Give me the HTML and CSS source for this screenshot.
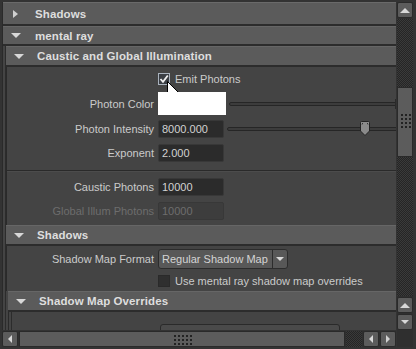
FILE: index.html
```html
<html>
    <head>
        <title>Attribute Editor</title>
        <link rel="stylesheet" href="styles.css">
    </head>
    <body>
        <div class="window">
            <div class="viewport">
                <div class="header top">
                    <span class="tri tri-right"></span>
                    <span class="title">Shadows</span>
                </div>
                <div class="header">
                    <span class="tri tri-down"></span>
                    <span class="title">mental ray</span>
                </div>
                <div class="frame">
                    <div class="header">
                        <span class="tri tri-down"></span>
                        <span class="title">Caustic and Global Illumination</span>
                    </div>
                    <div class="body">
                        <div class="group">
                            <div class="row check-row">
                                <span class="label"></span>
                                <span class="checkbox checked">
                                    <svg width="10" height="10" viewBox="0 0 10 10"><path d="M1.5 5 L4 7.8 L8.8 1.5" fill="none" stroke="#f0f0f0" stroke-width="1.8"/></svg>
                                </span>
                                <span class="check-text">Emit Photons</span>
                                <svg class="cursor" width="13" height="20" viewBox="0 0 13 20"><path d="M0.5 0.5 L0.5 15.5 L4 12.2 L6.6 18.5 L9 17.5 L6.5 11.5 L11.5 11.5 Z" fill="#fff" stroke="#000" stroke-width="1"/></svg>
                            </div>
                            <div class="row color-row">
                                <span class="label">Photon Color</span>
                                <span class="swatch"></span>
                                <span class="slider"><span class="track"></span><span class="edge"></span></span>
                            </div>
                            <div class="row">
                                <span class="label">Photon Intensity</span>
                                <span class="field">8000.000</span>
                                <span class="slider"><span class="track"></span>
                                    <svg class="handle" width="10" height="15" viewBox="0 0 10 15"><path d="M0.5 1.5 Q0.5 0.5 1.5 0.5 L8.5 0.5 Q9.5 0.5 9.5 1.5 L9.5 10 L5 14.5 L0.5 10 Z" fill="#8a8a8a" stroke="#222" stroke-width="1"/><path d="M2 2.5 H3 M7 2.5 H8 M2 3.5 V4 M8 3.5 V4" stroke="#333" stroke-width="1"/></svg>
                                </span>
                            </div>
                            <div class="row">
                                <span class="label">Exponent</span>
                                <span class="field">2.000</span>
                            </div>
                        </div>
                        <div class="group second">
                            <div class="row">
                                <span class="label">Caustic Photons</span>
                                <span class="field">10000</span>
                            </div>
                            <div class="row disabled">
                                <span class="label">Global Illum Photons</span>
                                <span class="field">10000</span>
                            </div>
                        </div>
                    </div>
                    <div class="header">
                        <span class="tri tri-down"></span>
                        <span class="title">Shadows</span>
                    </div>
                    <div class="body shadows-body">
                        <div class="row">
                            <span class="label">Shadow Map Format</span>
                            <span class="dropdown">
                                <span class="dd-text">Regular Shadow Map</span>
                                <span class="dd-arrow"><span class="tri tri-down small"></span></span>
                            </span>
                        </div>
                        <div class="row check-row">
                            <span class="label"></span>
                            <span class="checkbox"></span>
                            <span class="check-text">Use mental ray shadow map overrides</span>
                        </div>
                    </div>
                    <div class="sub">
                        <div class="header">
                            <span class="tri tri-down"></span>
                            <span class="title">Shadow Map Overrides</span>
                        </div>
                        <div class="body overrides-body">
                            <div class="inner-frame">
                                <span class="button-top"></span>
                            </div>
                        </div>
                    </div>
                </div>
            </div>
            <div class="vscroll">
                <div class="sbtn"><span class="tri tri-up"></span></div>
                <div class="vtrack">
                    <div class="vthumb">
                        <div class="grip"></div>
                    </div>
                </div>
                <div class="sbtn"><span class="tri tri-up"></span></div>
                <div class="sbtn"><span class="tri tri-down small"></span></div>
            </div>
            <div class="hscroll">
                <div class="sbtn"><span class="tri tri-left"></span></div>
                <div class="hthumb"><div class="hgrip"></div></div>
                <div class="htrack"></div>
                <div class="sbtn pair"><span class="tri tri-left"></span></div>
                <div class="sbtn pair"><span class="tri tri-right small"></span></div>
            </div>
        </div>
    </body>
</html>
```

FILE: styles.css
```css
body {
    margin: 0;
    background-color: #2e2e2e;
    font-family: "Liberation Sans", Arial, sans-serif;
    font-size: 11px;
    color: #cbcbcb;
}

.window {
    width: 416px;
    height: 349px;
    box-sizing: border-box;
    padding: 2px 3px 2px 2px;
    display: grid;
    grid-template-columns: 394px 16px;
    grid-template-rows: 328px 16px;
    gap: 1px;
    background-color: #333;
}

.viewport {
    grid-column: 1;
    grid-row: 1;
    overflow: hidden;
    background-color: #444;
    border-left: 1px solid #2a2a2a;
}

/* section headers */

.header {
    height: 17px;
    display: flex;
    align-items: center;
    background-color: #5b5b5b;
    border-top: 1px solid #666;
    border-bottom: 2px solid #2c2c2c;
    color: #dedede;
    font-weight: bold;
    font-size: 11.5px;
}

.header.top {
    height: 21px;
    border-top: 1px solid #6a6a6a;
}

.header .tri {
    margin-left: 8px;
    margin-right: 14px;
}

.title {
    letter-spacing: 0.1px;
    white-space: nowrap;
}

.tri {
    width: 0;
    height: 0;
    display: inline-block;
}

.tri-right {
    border-top: 4px solid transparent;
    border-bottom: 4px solid transparent;
    border-left: 5px solid #d0d0d0;
}

.header .tri-right {
    margin-left: 10px;
    margin-right: 17px;
}

.tri-down {
    border-left: 5px solid transparent;
    border-right: 5px solid transparent;
    border-top: 5px solid #d8d8d8;
}

.tri-down.small {
    border-left-width: 4px;
    border-right-width: 4px;
    border-top-width: 4px;
}

.tri-up {
    border-left: 5px solid transparent;
    border-right: 5px solid transparent;
    border-bottom: 5px solid #d8d8d8;
}

.tri-left {
    border-top: 4px solid transparent;
    border-bottom: 4px solid transparent;
    border-right: 4px solid #d8d8d8;
}

.tri-right.small {
    border-left-width: 4px;
}

/* nested frame */

.frame {
    margin-left: 2px;
    border-left: 1px solid #2c2c2c;
}

.frame .header {
    height: 18px;
}

.frame .header .tri {
    margin-left: 8px;
    margin-right: 13px;
}

.body {
    border-left: 1px solid #2a2a2a;
}

.group {
    padding: 6px 0 8px 0;
    display: flex;
    flex-direction: column;
    gap: 6px;
}

.group .color-row {
    margin-top: 1px;
    margin-bottom: -1px;
}

.group.second {
    border-top: 1px solid #2a2a2a;
    box-shadow: inset 0 1px 0 #4c4c4c;
    padding: 7px 0 5px 0;
}

.row {
    display: flex;
    align-items: center;
    height: 18px;
    position: relative;
    white-space: nowrap;
}

.label {
    width: 147px;
    text-align: right;
    padding-right: 4px;
    flex: none;
}

.field {
    width: 66px;
    height: 18px;
    box-sizing: border-box;
    background-color: #2b2b2b;
    border: 1px solid #383838;
    border-radius: 2px;
    padding: 0 0 0 3px;
    line-height: 16px;
    color: #d2d2d2;
    flex: none;
}

.check-row {
    height: 12px;
}

.checkbox {
    width: 12px;
    height: 12px;
    box-sizing: border-box;
    background-color: #2f2f2f;
    border: 1px solid #2a2a2a;
    display: flex;
    align-items: center;
    justify-content: center;
    flex: none;
}

.checkbox.checked {
    background-color: #3a3e44;
    border: 1px solid #a9b2bd;
}

.check-text {
    margin-left: 5px;
}

.cursor {
    position: absolute;
    left: 160px;
    top: 8px;
}

.color-row {
    height: 23px;
}

.swatch {
    width: 68px;
    height: 23px;
    background-color: #fff;
    flex: none;
}

.slider {
    flex: 1;
    position: relative;
    height: 18px;
    margin-left: 3px;
}

.track {
    position: absolute;
    left: 0;
    right: -2px;
    top: 7px;
    height: 2px;
    border: 1px solid #262626;
    border-radius: 2px;
    background-color: #3c3c3c;
}

.edge {
    position: absolute;
    right: -3px;
    top: 4px;
    width: 2px;
    height: 8px;
    background-color: #bdbdbd;
    border: 1px solid #2a2a2a;
}

.handle {
    position: absolute;
    left: 133px;
    top: 1px;
}

.disabled {
    color: #6d6d6d;
}

.disabled .field {
    background-color: #3d3d3d;
    color: #6d6d6d;
}

/* shadows */

.shadows-body {
    padding: 3px 0 4px 0;
    display: flex;
    flex-direction: column;
    gap: 6px;
}

.shadows-body .row {
    height: 20px;
}

.shadows-body .check-row {
    height: 12px;
}

.dropdown {
    display: flex;
    height: 20px;
    width: 130px;
    box-sizing: border-box;
    background-color: #585858;
    border: 1px solid #2c2c2c;
    border-radius: 3px;
    color: #d4d4d4;
    flex: none;
}

.dd-text {
    flex: 1;
    padding-left: 3px;
    line-height: 18px;
    border-right: 1px solid #2c2c2c;
}

.dd-arrow {
    width: 14px;
    display: flex;
    align-items: center;
    justify-content: center;
}

.sub {
    padding-left: 2px;
}

.overrides-body {
    height: 40px;
    padding-left: 2px;
}

.inner-frame {
    height: 100%;
    border-left: 1px solid #2c2c2c;
    position: relative;
}

.button-top {
    position: absolute;
    left: 148px;
    top: 12px;
    width: 178px;
    height: 20px;
    border: 1px solid #2a2a2a;
    border-radius: 3px;
    background-color: #4a4a4a;
}

/* scrollbars */

.vscroll {
    grid-column: 2;
    grid-row: 1 / 3;
    display: flex;
    flex-direction: column;
    gap: 1px;
    background-color: #2f2f2f;
}

.sbtn {
    height: 14px;
    flex: none;
    display: flex;
    align-items: center;
    justify-content: center;
    background-color: #5c5c5c;
    border: 1px solid #2a2a2a;
    border-radius: 2px;
}

.vtrack {
    flex: 1;
    background-color: #2b2b2b;
    background-image: repeating-conic-gradient(#252525 0 25%, #3a3a3a 0 50%);
    background-size: 2px 2px;
    padding-top: 68px;
}

.vthumb {
    height: 70px;
    background-color: #5c5c5c;
    border: 1px solid #2a2a2a;
    display: flex;
    justify-content: center;
    padding-top: 25px;
    box-sizing: border-box;
}

.grip {
    width: 11px;
    height: 15px;
    background-image: radial-gradient(#222 0.8px, transparent 1px);
    background-size: 4px 4px;
}

.vscroll .sbtn:last-child {
    margin-bottom: 17px;
}

.hscroll {
    grid-column: 1;
    grid-row: 2;
    display: flex;
    gap: 1px;
    background-color: #2f2f2f;
}

.hscroll .sbtn {
    width: 14px;
    height: 14px;
}

.hthumb {
    width: 326px;
    box-sizing: border-box;
    background-color: #5c5c5c;
    border: 1px solid #2a2a2a;
    display: flex;
    justify-content: center;
    align-items: center;
}

.hgrip {
    width: 19px;
    height: 11px;
    background-image: radial-gradient(#222 0.8px, transparent 1px);
    background-size: 4px 4px;
}

.htrack {
    flex: 1;
    background-image: repeating-conic-gradient(#252525 0 25%, #3a3a3a 0 50%);
    background-size: 2px 2px;
}
```
